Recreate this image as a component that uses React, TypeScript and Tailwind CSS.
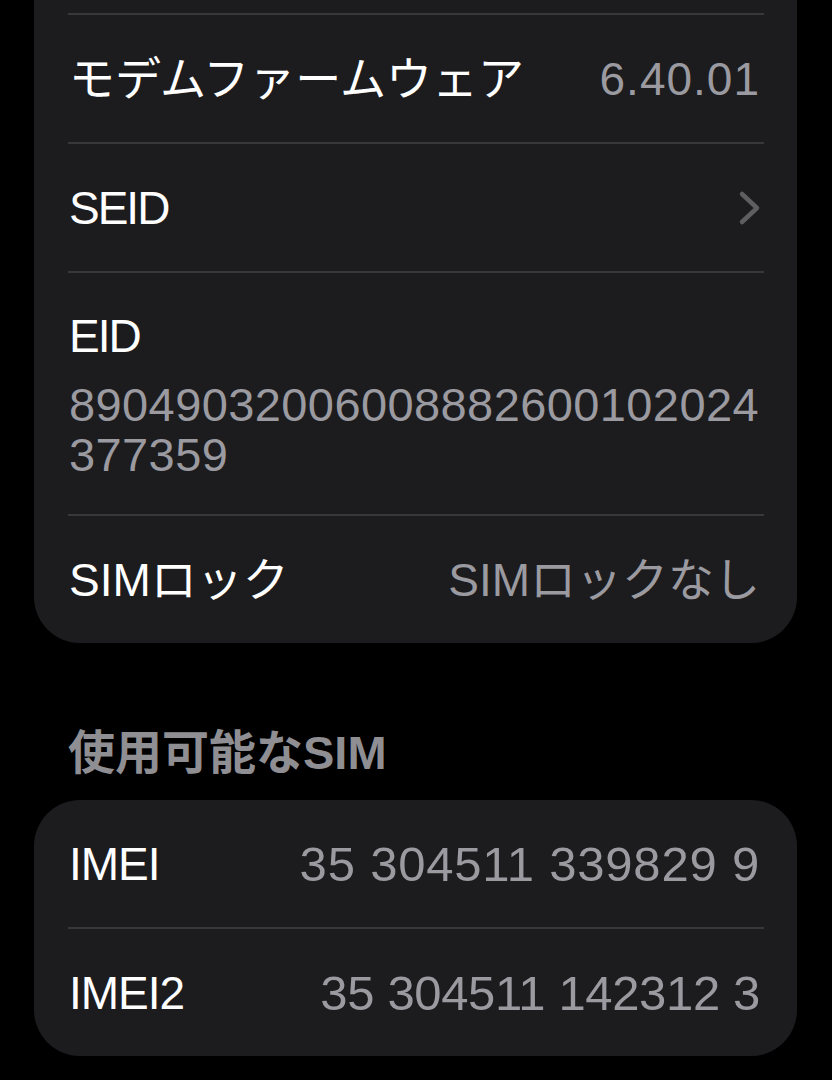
const font = { fontFamily: '"Liberation Sans", "Noto Sans CJK JP", sans-serif' };

function Divider() {
  return <div className="ml-[34px] mr-[33px] h-[2px] bg-[#38383b]" />;
}

function Row({ label, value, labelClass, valueClass }: { label: string; value?: string; labelClass?: string; valueClass?: string }) {
  return (
    <div className="flex h-[127px] items-center justify-between pl-[35px] pr-[37px]">
      <span className={"text-[46px] leading-[56px] text-white " + (labelClass ?? "")}>{label}</span>
      {value && <span className={"leading-[56px] text-[#9a9aa0] " + (valueClass ?? "text-[46px]")}>{value}</span>}
    </div>
  );
}

export default function App() {
  return (
    <div className="min-h-screen w-full overflow-hidden bg-black" style={font}>
      {/* top card, cut off at the top of the screen */}
      <div className="ml-[34px] mr-[35px] rounded-b-[46px] bg-[#1c1c1e]">
        <div className="h-[13px]" />
        <Divider />
        <Row label="モデムファームウェア" value="6.40.01" valueClass="text-[46px] tracking-[1px]" />
        <Divider />
        <div className="flex h-[127px] items-center justify-between pl-[35px] pr-[35px]">
          <span className="text-[46px] leading-[56px] tracking-[-2px] text-white">SEID</span>
          <svg width="24" height="36" viewBox="0 0 24 36" fill="none">
            <path d="M4 4 L19 18 L4 32" stroke="#5d5d62" strokeWidth="4.5" strokeLinecap="round" strokeLinejoin="round" />
          </svg>
        </div>
        <Divider />
        <div className="flex h-[241px] flex-col pl-[35px] pr-[35px] pt-[35px]">
          <span className="text-[46px] leading-[56px] tracking-[-2px] text-white">EID</span>
          <span className="mt-[16px] text-[47px] leading-[50px] tracking-[0.4px] text-[#9a9aa0]">
            89049032006008882600102024
            <br />
            377359
          </span>
        </div>
        <Divider />
        <Row label="SIMロック" value="SIMロックなし" />
      </div>

      <div className="ml-[68px] mt-[82px] mb-[19px] text-[47px] font-semibold leading-[56px] text-[#8e8e93]">
        使用可能なSIM
      </div>

      <div className="ml-[34px] mr-[35px] rounded-[46px] bg-[#1c1c1e]">
        <Row
          label="IMEI"
          value="35 304511 339829 9"
          labelClass="tracking-[-1px]"
          valueClass="text-[49px] tracking-[0.8px]"
        />
        <Divider />
        <Row
          label="IMEI2"
          value="35 304511 142312 3"
          labelClass="tracking-[-1px]"
          valueClass="text-[49px] tracking-[-0.35px]"
        />
      </div>
    </div>
  );
}
